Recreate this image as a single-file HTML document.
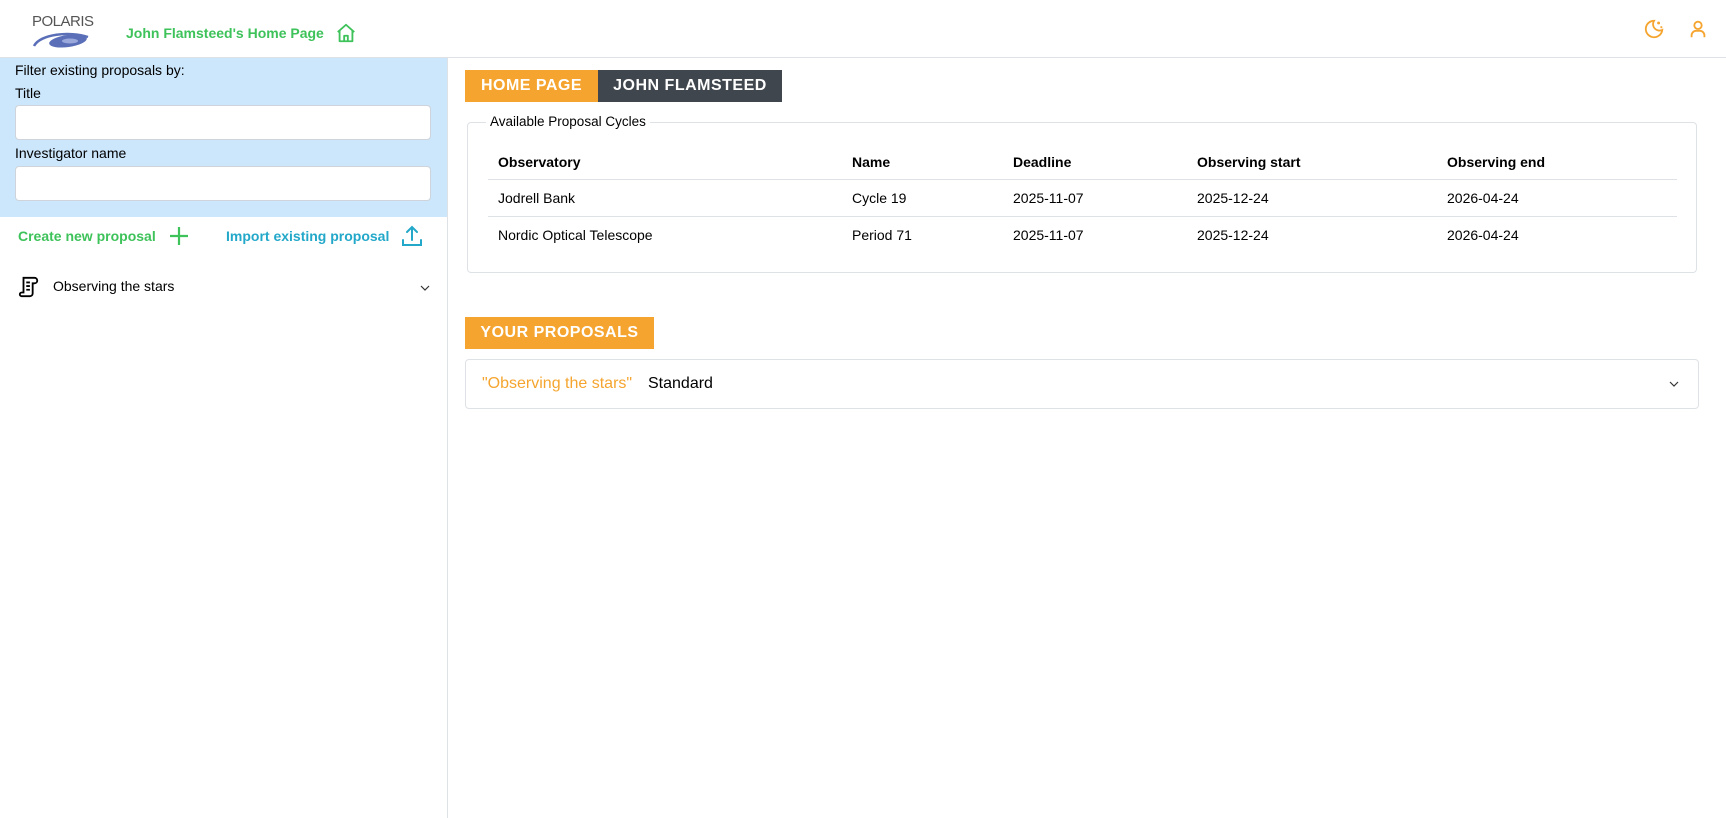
<!DOCTYPE html>
<html><head><meta charset="utf-8"><style>
*{box-sizing:border-box;margin:0;padding:0}
body{width:1726px;height:818px;overflow:hidden;background:#fff;font-family:"Liberation Sans",Arial,sans-serif;color:#000;position:relative;font-size:14px}
.a{position:absolute}
.hdr{left:0;top:0;width:1726px;height:58px;border-bottom:1px solid #dee2e6}
.side{left:0;top:58px;width:448px;height:760px;border-right:1px solid #dee2e6}
.blue{left:0;top:58px;width:447px;height:159px;background:#cce6fb}
.inp{background:#fff;border:1px solid #ced4da;border-radius:4px;height:35px;left:15px;width:416px}
.tab{height:32px;line-height:32px;color:#fff;font-weight:bold;font-size:16px;letter-spacing:.5px;text-align:center}
th,td{text-align:left;padding-left:10px;font-size:14px}
th{font-weight:bold}
</style></head><body>
<div class="a hdr"></div>
<svg class="a" style="left:30px;top:12px" width="64" height="40" viewBox="0 0 64 40">
<text x="2" y="14" font-family="Liberation Sans" font-size="15" fill="#555" letter-spacing="-0.5">POLARIS</text>
<path d="M4 34 C10 22 40 19 58 25" stroke="#5a6fb8" stroke-width="2.5" fill="none"/>
<ellipse cx="38" cy="29" rx="19" ry="6" fill="#5a6fb8" transform="rotate(-8 38 29)"/>
<ellipse cx="40" cy="29" rx="8" ry="2.5" fill="#9aa8dc"/>
</svg>
<div class="a" style="left:126px;top:25px;color:#3ec25a;font-weight:bold;font-size:14px">John Flamsteed's Home Page</div>
<svg class="a" style="left:335px;top:22px" width="22" height="22" viewBox="0 0 24 24" fill="none" stroke="#3ec25a" stroke-width="2" stroke-linejoin="round"><path d="M3 11 L12 3 L21 11 M5 9 V21 H19 V9 M10 21 V15 H14 V21"/></svg>
<svg class="a" style="left:1643px;top:18px" width="22" height="22" viewBox="0 0 24 24" fill="none" stroke="#f5a52f" stroke-width="2"><path d="M12 3 A9 9 0 1 0 21 13 A7 7 0 0 1 12 3 Z"/><path d="M17 4 v3 M15.5 5.5 h3 M20 9 v2 M19 10 h2"/></svg>
<svg class="a" style="left:1687px;top:18px" width="22" height="22" viewBox="0 0 24 24" fill="none" stroke="#f5a52f" stroke-width="2"><circle cx="12" cy="8" r="4"/><path d="M5 21 V19 A5 5 0 0 1 10 14 H14 A5 5 0 0 1 19 19 V21"/></svg>

<div class="a side"></div>
<div class="a blue"></div>
<div class="a" style="left:15px;top:62px">Filter existing proposals by:</div>
<div class="a" style="left:15px;top:85px">Title</div>
<div class="a inp" style="top:105px"></div>
<div class="a" style="left:15px;top:145px">Investigator name</div>
<div class="a inp" style="top:166px"></div>
<div class="a" style="left:18px;top:228px;color:#3ec25a;font-weight:bold">Create new proposal</div>
<svg class="a" style="left:168px;top:225px" width="22" height="22" viewBox="0 0 22 22" stroke="#3ec25a" stroke-width="2.2"><path d="M11 2V20M2 11H20"/></svg>
<div class="a" style="left:226px;top:228px;color:#23a8c9;font-weight:bold">Import existing proposal</div>
<svg class="a" style="left:400px;top:224px" width="24" height="24" viewBox="0 0 24 24" fill="none" stroke="#23a8c9" stroke-width="2" stroke-linecap="round"><path d="M12 16V3M7 8L12 3L17 8M3 16V21H21V16"/></svg>
<svg class="a" style="left:18px;top:276px" width="22" height="22" viewBox="0 0 24 24" fill="none" stroke="#000" stroke-width="2"><path d="M6 2H18A3 3 0 0 1 18 8H16V19A3 3 0 0 1 13 22H4A2 2 0 0 1 4 18H6Z M9 7H13M9 11H13M9 15H13"/></svg>
<div class="a" style="left:53px;top:278px;font-size:14px">Observing the stars</div>
<svg class="a" style="left:419px;top:282px" width="12" height="12" viewBox="0 0 12 12" fill="none" stroke="#333" stroke-width="1.2"><path d="M2 4L6 8L10 4"/></svg>

<div class="a tab" style="left:465px;top:70px;width:133px;background:#f5a52f">HOME PAGE</div>
<div class="a tab" style="left:598px;top:70px;width:184px;background:#40464d">JOHN FLAMSTEED</div>
<div class="a" style="left:467px;top:122px;width:1230px;height:151px;border:1px solid #dee2e6;border-radius:4px"></div>
<div class="a" style="left:486px;top:114px;background:#fff;padding:0 4px;font-size:13.5px">Available Proposal Cycles</div>
<table class="a" style="left:488px;top:145px;width:1189px;border-collapse:collapse">
<tr style="height:34px;border-bottom:1px solid #dee2e6"><th style="width:354px">Observatory</th><th style="width:161px">Name</th><th style="width:184px">Deadline</th><th style="width:250px">Observing start</th><th>Observing end</th></tr>
<tr style="height:37px;border-bottom:1px solid #dee2e6"><td>Jodrell Bank</td><td>Cycle 19</td><td>2025-11-07</td><td>2025-12-24</td><td>2026-04-24</td></tr>
<tr style="height:37px"><td>Nordic Optical Telescope</td><td>Period 71</td><td>2025-11-07</td><td>2025-12-24</td><td>2026-04-24</td></tr>
</table>
<div class="a tab" style="left:465px;top:317px;width:189px;background:#f5a52f">YOUR PROPOSALS</div>
<div class="a" style="left:465px;top:359px;width:1234px;height:50px;border:1px solid #dee2e6;border-radius:4px"></div>
<div class="a" style="left:482px;top:375px;color:#f5a52f;font-size:16px">"Observing the stars"</div>
<div class="a" style="left:648px;top:375px;font-size:16px">Standard</div>
<svg class="a" style="left:1668px;top:378px" width="12" height="12" viewBox="0 0 12 12" fill="none" stroke="#333" stroke-width="1.2"><path d="M2 4L6 8L10 4"/></svg>
</body></html>
